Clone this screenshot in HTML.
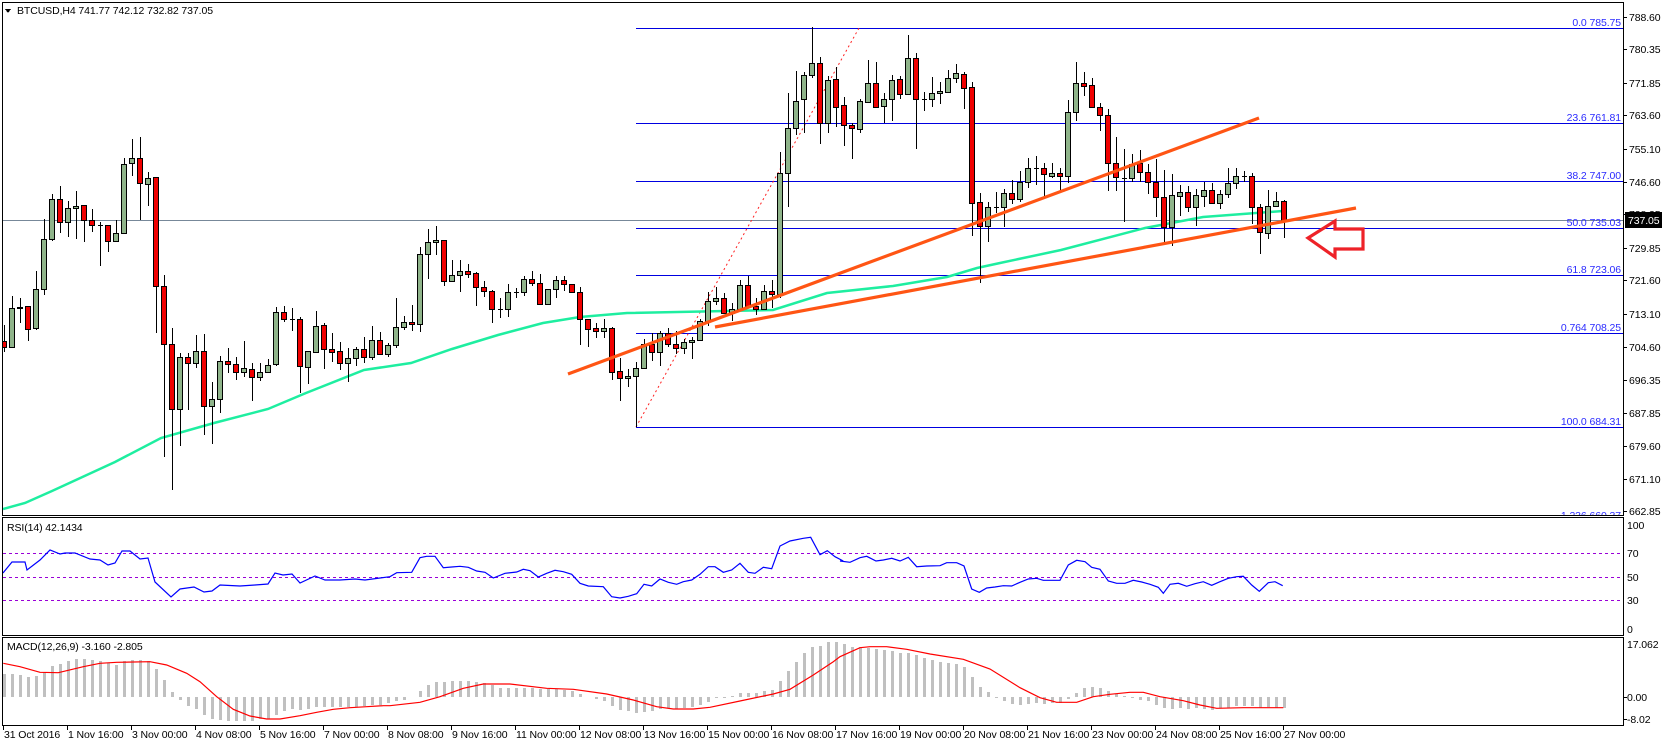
<!DOCTYPE html>
<html><head><meta charset="utf-8">
<style>
html,body{margin:0;padding:0;background:#fff;width:1663px;height:746px;overflow:hidden}
svg{display:block}
text{font-family:"Liberation Sans",sans-serif;font-size:10.5px;letter-spacing:-0.1px}
</style></head><body>
<svg id="s" width="1663" height="746" xmlns="http://www.w3.org/2000/svg" shape-rendering="crispEdges">
<rect width="1663" height="746" fill="#fff"/>
<defs><clipPath id="cm"><rect x="3" y="3" width="1620" height="512"/></clipPath>
<clipPath id="cr"><rect x="3" y="518" width="1620" height="117"/></clipPath>
<clipPath id="cd"><rect x="3" y="638" width="1620" height="87"/></clipPath></defs>
<g id="main" clip-path="url(#cm)"></g>
<g id="rsi" clip-path="url(#cr)"></g>
<g id="macd" clip-path="url(#cd)"></g>
<g id="axes"></g>
</svg>
<script>
var NS="http://www.w3.org/2000/svg";
function el(p,t,a,txt){var e=document.createElementNS(NS,t);for(var k in a)e.setAttribute(k,a[k]);if(txt!=null)e.textContent=txt;p.appendChild(e);return e;}
var M=document.getElementById('main'),R=document.getElementById('rsi'),D=document.getElementById('macd'),A=document.getElementById('axes');
var fibs=[[28,"0.0  785.75"],[123,"23.6  761.81"],[181,"38.2  747.00"],[228,"50.0 735.03"],[275,"61.8  723.06"],[333,"0.764  708.25"],[427,"100.0  684.31"],[521,"1.236  660.37"]];
el(M,'line',{x1:3,y1:220.5,x2:1623,y2:220.5,stroke:'#778899','stroke-width':1});
fibs.forEach(function(f){el(M,'line',{x1:636,y1:f[0]+0.5,x2:1623,y2:f[0]+0.5,stroke:'#0000e0','stroke-width':1});
 el(M,'text',{x:1621,y:f[0]-2,'text-anchor':'end',fill:'#2a2aff','xml:space':'preserve'},f[1]);});
el(M,'line',{x1:636,y1:427,x2:859,y2:28,stroke:'#ff2020','stroke-width':1,'stroke-dasharray':'2,3','shape-rendering':'auto'});
var ma=[[3,509],[25,503],[52,491],[115,462],[161,438],[214,423],[268,409],[306,393],[364,370],[411,363],[452,349],[498,335],[543,323],[580,317],[627,313],[773,310],[827,293],[893,286],[947,277],[977,268],[1000,263],[1061,250],[1145,228],[1203,217],[1283,211]];
el(M,'polyline',{points:ma.map(function(p){return p.join(',')}).join(' '),fill:'none',stroke:'#1eeea0','stroke-width':2.5,'shape-rendering':'auto'});
var C="r 1022 1040 975 1055|g 925 1042 888 1045|d 922 925 895 968|r 918 988 918 1022|g 868 985 812 990|g 718 868 658 885|g 598 718 582 722|r 598 667 558 698|g 625 667 603 710|g 619 625 573 718|r 616 660 616 725|r 661 676 628 695|d 676 676 665 797|r 676 724 676 755|g 700 724 660 725|g 492 700 473 700|g 475 490 416 527|r 475 550 410 660|g 535 552 517 618|r 532 857 532 1000|r 857 1032 825 1372|r 1032 1228 985 1470|g 1072 1228 1060 1337|r 1072 1090 1060 1230|g 1053 1090 1005 1103|r 1053 1217 1003 1305|g 1197 1217 1145 1333|g 1083 1197 1068 1240|r 1083 1093 1045 1120|r 1093 1117 1070 1140|g 1105 1117 1023 1132|r 1107 1130 1090 1202|g 1117 1130 1090 1143|g 1096 1117 1078 1120|g 937 1093 922 1097|r 937 958 918 965|d 958 958 925 992|r 958 1098 952 1178|g 1053 1102 1053 1152|g 978 1055 933 1060|r 975 1048 970 1108|r 1048 1055 1000 1085|r 1053 1090 1025 1110|g 1075 1090 1043 1147|g 1048 1075 1040 1098|r 1048 1072 1012 1090|g 1020 1070 978 1080|r 1020 1062 997 1065|g 1035 1062 1028 1072|g 982 1035 893 1045|g 967 982 948 990|r 967 973 915 992|g 762 972 740 995|g 727 762 688 838|g 720 727 678 765|r 720 842 720 858|g 826 842 780 842|g 813 826 780 875|r 813 822 792 835|r 820 862 815 917|r 862 872 842 890|r 872 927 870 968|d 927 927 893 953|g 877 927 852 950|d 877 877 865 893|g 838 877 828 888|r 838 850 813 858|r 850 912 822 915|g 868 912 868 912|g 840 868 828 895|r 840 852 828 872|r 853 877 853 880|r 877 957 862 1035|r 957 987 957 1040|r 985 992 970 1015|g 985 992 958 1015|r 985 1115 982 1140|r 1113 1135 1075 1202|g 1127 1135 1108 1160|g 1105 1127 1087 1282|g 1033 1105 1018 1108|r 1033 1055 1000 1082|g 1000 1055 992 1097|r 1000 1033 985 1042|r 1033 1045 992 1062|g 1027 1045 1018 1062|g 1020 1027 1012 1078|g 962 1020 958 1023|g 902 962 877 977|g 895 902 862 915|r 895 940 880 942|g 927 940 910 962|g 856 927 840 930|r 856 918 828 925|r 918 927 895 945|g 873 927 855 930|r 873 883 840 925|g 520 883 455 895|g 385 520 280 620|g 303 385 213 405|g 226 298 216 398|g 190 226 82 233|r 190 368 170 432|g 240 368 228 398|r 238 320 202 380|r 316 376 290 437|r 376 385 368 476|g 303 388 298 398|g 250 305 180 308|r 250 320 187 320|g 297 318 280 368|g 240 298 226 362|r 238 283 228 298|g 175 283 105 283|r 175 298 158 448|d 298 298 275 332|g 280 298 232 322|g 273 280 245 313|g 235 275 210 280|g 220 235 192 250|r 223 263 216 326|r 262 610 246 708|r 606 677 580 848|g 622 677 605 727|d 620 620 577 638|g 580 620 568 680|r 580 598 540 612|g 546 598 513 605|g 505 546 475 563|d 503 503 468 555|r 503 522 490 590|g 520 527 490 535|r 520 527 505 578|g 337 527 300 550|g 250 337 186 362|r 250 257 216 287|r 256 320 234 323|r 320 346 309 392|r 346 490 327 572|r 490 530 410 572|d 533 533 447 665|g 492 535 462 545|r 490 517 450 545|r 517 547 492 582|r 547 592 478 652|r 590 682 510 727|g 585 682 522 737|g 577 587 555 647|r 577 622 558 637|g 585 622 567 678|g 570 587 545 622|r 570 610 548 612|g 582 610 570 627|g 550 583 505 593|g 529 550 505 567|d 528 528 513 545|r 528 622 520 672|r 622 697 612 762|g 617 698 570 718|g 603 617 577 622|r 603 660 600 713".split('|');
C.forEach(function(s,i){var a=s.split(' '),cx=4+8*i,bt=Math.round(+a[1]/3),bb=Math.round(+a[2]/3),wt=Math.round(+a[3]/3),wb=Math.round(+a[4]/3);
 el(M,'rect',{x:cx,y:wt,width:1,height:Math.max(1,wb-wt),fill:'#000'});
 if(a[0]=='d'||bb-bt<2){el(M,'rect',{x:cx-2,y:bt,width:5,height:Math.max(1,bb-bt+1),fill:a[0]=='r'?'#e80000':'#000'});
  if(bb-bt>=1){el(M,'rect',{x:cx-2.5,y:bt+0.5,width:5,height:bb-bt,fill:a[0]=='r'?'#f00000':'#8fb48a',stroke:'#000','stroke-width':1});}}
 else el(M,'rect',{x:cx-2.5,y:bt+0.5,width:5,height:bb-bt,fill:a[0]=='r'?'#f00000':'#8fb48a',stroke:'#000','stroke-width':1});
});
el(M,'line',{x1:568,y1:374,x2:1259,y2:118,stroke:'#ff5514','stroke-width':3.2,'shape-rendering':'auto'});
el(M,'line',{x1:715,y1:327,x2:1356,y2:208,stroke:'#ff5514','stroke-width':3.2,'shape-rendering':'auto'});
el(M,'polygon',{points:'1308,238 1335,221 1335,229 1363,229 1363,249 1335,249 1335,257',fill:'none',stroke:'#ee2228','stroke-width':3.2,'stroke-linejoin':'miter','shape-rendering':'auto'});
el(M,'polygon',{points:'5,9 11,9 8,13',fill:'#000'});
el(M,'text',{x:17,y:14,fill:'#000','xml:space':'preserve'},'BTCUSD,H4  741.77 742.12 732.82 737.05');
[553,577,600].forEach(function(y){el(R,'line',{x1:3,y1:y+0.5,x2:1623,y2:y+0.5,stroke:'#9a00d8','stroke-width':1,'stroke-dasharray':'3,3'});});
var r1=[[3,573],[12,562],[25,562],[27,570],[40,560],[50,550],[60,554],[65,553],[75,553],[90,559],[100,560],[108,565],[115,563],[122,551],[130,551],[140,559],[148,558],[155,582],[171,597],[180,589],[194,587],[204,592],[212,591],[220,585],[240,586],[255,585],[268,584],[275,573],[283,575],[292,574],[300,583],[315,576],[325,580],[340,580],[355,579],[365,580],[380,578]];
var r2=[0,185,20,173,65,172,90,128,110,124,135,124,160,158,185,156,210,154,235,157,260,168,285,172,310,189,345,175,380,171,400,163,420,167,445,186,470,175,495,166,520,170,545,178,570,205,595,213,640,215,665,245,690,249,715,244,740,236,762,208,785,213,810,192,835,202,860,208,880,200,905,195,930,178,955,155,975,155,1000,172,1025,165,1050,145,1075,172,1095,175,1120,157,1145,161,1170,93,1200,78,1240,70,1262,67,1290,119,1312,107,1335,125,1360,138];
var r3=[0,138,30,142,60,128,80,124,108,138,130,135,155,130,180,138,205,127,230,155,260,153,300,152,320,143,350,143,372,153,395,222,418,232,440,219,465,216,490,212,515,213,540,202,565,192,590,190,610,196,660,196,685,150,710,136,735,140,755,157,780,163,805,198,830,205,855,205,880,196,905,201,930,208,955,217,970,235,990,208,1015,205,1040,214,1065,206,1090,200,1115,211,1140,200,1165,190,1190,185,1210,184,1235,210,1258,229,1285,203,1305,200,1328,212];
var rp=r1.slice();
for(var i=0;i<r2.length;i+=2)rp.push([390+r2[i]/3,515+r2[i+1]/3]);
for(var i=0;i<r3.length;i+=2)rp.push([840+r3[i]/3,515+r3[i+1]/3]);
el(R,'polyline',{points:rp.map(function(p){return p[0].toFixed(1)+','+p[1].toFixed(1)}).join(' '),fill:'none',stroke:'#0000ff','stroke-width':1.2,'shape-rendering':'auto'});
el(A,'text',{x:7,y:531,fill:'#000'},'RSI(14) 42.1434');
var h1=[10,583,33,583,57,585,82,590,105,588,130,578,152,558,177,552,200,543,225,537,248,538,272,540,297,543,320,548,345,555,368,545,392,540,415,540,440,540,465,563,490,597,514,635,538,658,562,678,585,685,610,703,634,718,658,720,680,722,705,723,728,723,753,725,778,718,800,718,825,705,850,695,873,688,898,690,920,688,945,680,970,680,993,680,1018,680,1040,680,1063,680,1088,680,1113,675,1138,675,1160,670,1185,665];
var h2=[15,560,40,555,62,550,85,530,110,513,135,500,158,500,183,497,208,497,232,497,257,500,280,505,305,510,328,518,353,518,377,520,400,518,423,520,448,523,472,523,495,523,520,525,545,527,568,535,592,545,615,550,640,558,663,570,687,583,710,588,735,593,760,590,783,590,807,583,832,580,855,583,880,580,903,577,928,570,952,562,975,550,1000,548,1023,545,1048,535,1072,535,1097,535,1120,528,1143,528,1168,500,1192,470,1215,443,1240,417,1263,397,1288,393,1312,380,1335,380,1360,387];
var h3=[10,387,33,397,57,397,80,400,105,403,130,405,153,408,178,413,202,412,225,420,250,428,273,435,298,440,322,443,345,447,370,453,393,483,417,513,442,530,465,547,490,557,513,567,537,570,562,567,585,565,610,567,633,565,658,565,682,555,705,535,730,520,753,515,778,517,800,525,825,535,850,543,873,548,897,555,922,557,945,567,968,580,993,582,1017,580,1042,583,1065,580,1090,582,1113,585,1138,578,1162,578,1185,573,1210,572,1235,573,1258,580,1283,577,1307,578,1330,580];
var hp=[];
for(var i=0;i<h1.length;i+=2)if(h1[i]/3<390)hp.push([h1[i]/3,480+h1[i+1]/3]);
for(var i=0;i<h2.length;i+=2)if(390+h2[i]/3<840)hp.push([390+h2[i]/3,515+h2[i+1]/3]);
for(var i=0;i<h3.length;i+=2)hp.push([840+h3[i]/3,515+h3[i+1]/3]);
function interp(P,x){if(x<=P[0][0])return P[0][1];for(var i=1;i<P.length;i++){if(x<=P[i][0]){var t=(x-P[i-1][0])/(P[i][0]-P[i-1][0]);return P[i-1][1]+t*(P[i][1]-P[i-1][1]);}}return P[P.length-1][1];}
for(var i=0;i<161;i++){var cx=4+8*i,y=Math.round(interp(hp,cx)),z=697;
 if(Math.abs(y-z)<1)continue;
 el(D,'rect',{x:cx-1,y:Math.min(y,z),width:3,height:Math.abs(y-z),fill:'#c0c0c0'});}
var s1=[10,550,60,560,120,577,175,578,250,560,300,550,350,547,450,545,500,555,560,580,600,605,650,650,700,688,750,708,800,717,840,717,900,707,950,697,1000,688,1050,683,1100,680,1150,677];
var s2=[0,572,90,562,150,545,220,520,280,507,360,507,470,520,550,523,650,537,730,555,800,575,850,582,910,582,960,577,1050,558,1150,537,1200,523,1270,480,1330,440];
var s3=[0,425,60,398,90,395,140,395,200,403,270,417,370,433,450,462,540,518,600,548,650,562,710,562,760,545,810,538,870,532,910,532,960,545,1030,557,1080,570,1130,580,1210,578,1330,578];
var sp=[];
for(var i=0;i<s1.length;i+=2)sp.push([s1[i]/3,480+s1[i+1]/3]);
for(var i=0;i<s2.length;i+=2)sp.push([390+s2[i]/3,515+s2[i+1]/3]);
for(var i=0;i<s3.length;i+=2)sp.push([840+s3[i]/3,515+s3[i+1]/3]);
el(D,'polyline',{points:sp.map(function(p){return p[0].toFixed(1)+','+p[1].toFixed(1)}).join(' '),fill:'none',stroke:'#ff0000','stroke-width':1.2,'shape-rendering':'auto'});
el(A,'text',{x:7,y:650,fill:'#000'},'MACD(12,26,9) -3.160 -2.805');
[[2,2,1621,513],[2,517,1621,118],[2,637,1621,88]].forEach(function(b){el(A,'rect',{x:b[0]+0.5,y:b[1]+0.5,width:b[2],height:b[3],fill:'none',stroke:'#000','stroke-width':1});});
var pl=["788.60","780.35","771.85","763.60","755.10","746.60","738.35","729.85","721.60","713.10","704.60","696.35","687.85","679.60","671.10","662.85"];
pl.forEach(function(t){var y=Math.round(28+(785.75-parseFloat(t))*3.934);el(A,'rect',{x:1623,y:y,width:4,height:1,fill:'#000'});el(A,'text',{x:1629,y:y+4,fill:'#000'},t);});
el(A,'rect',{x:1625,y:212,width:37,height:16,fill:'#000'});
el(A,'text',{x:1628,y:224,fill:'#fff'},'737.05');
[[529,'100'],[557,'70'],[581,'50'],[604,'30'],[633,'0']].forEach(function(a){el(A,'text',{x:1627,y:a[0],fill:'#000'},a[1]);});
el(A,'text',{x:1627,y:648,fill:'#000'},'17.062');
el(A,'rect',{x:1623,y:697,width:4,height:1,fill:'#000'});
el(A,'text',{x:1627,y:701,fill:'#000'},'0.00');
el(A,'rect',{x:1623,y:719,width:4,height:1,fill:'#000'});
el(A,'text',{x:1627,y:723,fill:'#000'},'-8.02');
var dl=["31 Oct 2016","1 Nov 16:00","3 Nov 00:00","4 Nov 08:00","5 Nov 16:00","7 Nov 00:00","8 Nov 08:00","9 Nov 16:00","11 Nov 00:00","12 Nov 08:00","13 Nov 16:00","15 Nov 00:00","16 Nov 08:00","17 Nov 16:00","19 Nov 00:00","20 Nov 08:00","21 Nov 16:00","23 Nov 00:00","24 Nov 08:00","25 Nov 16:00","27 Nov 00:00"];
dl.forEach(function(t,k){var x=3+64*k;el(A,'rect',{x:x,y:726,width:1,height:4,fill:'#000'});el(A,'text',{x:x+1,y:738,fill:'#000'},t);});
</script>
</body></html>
